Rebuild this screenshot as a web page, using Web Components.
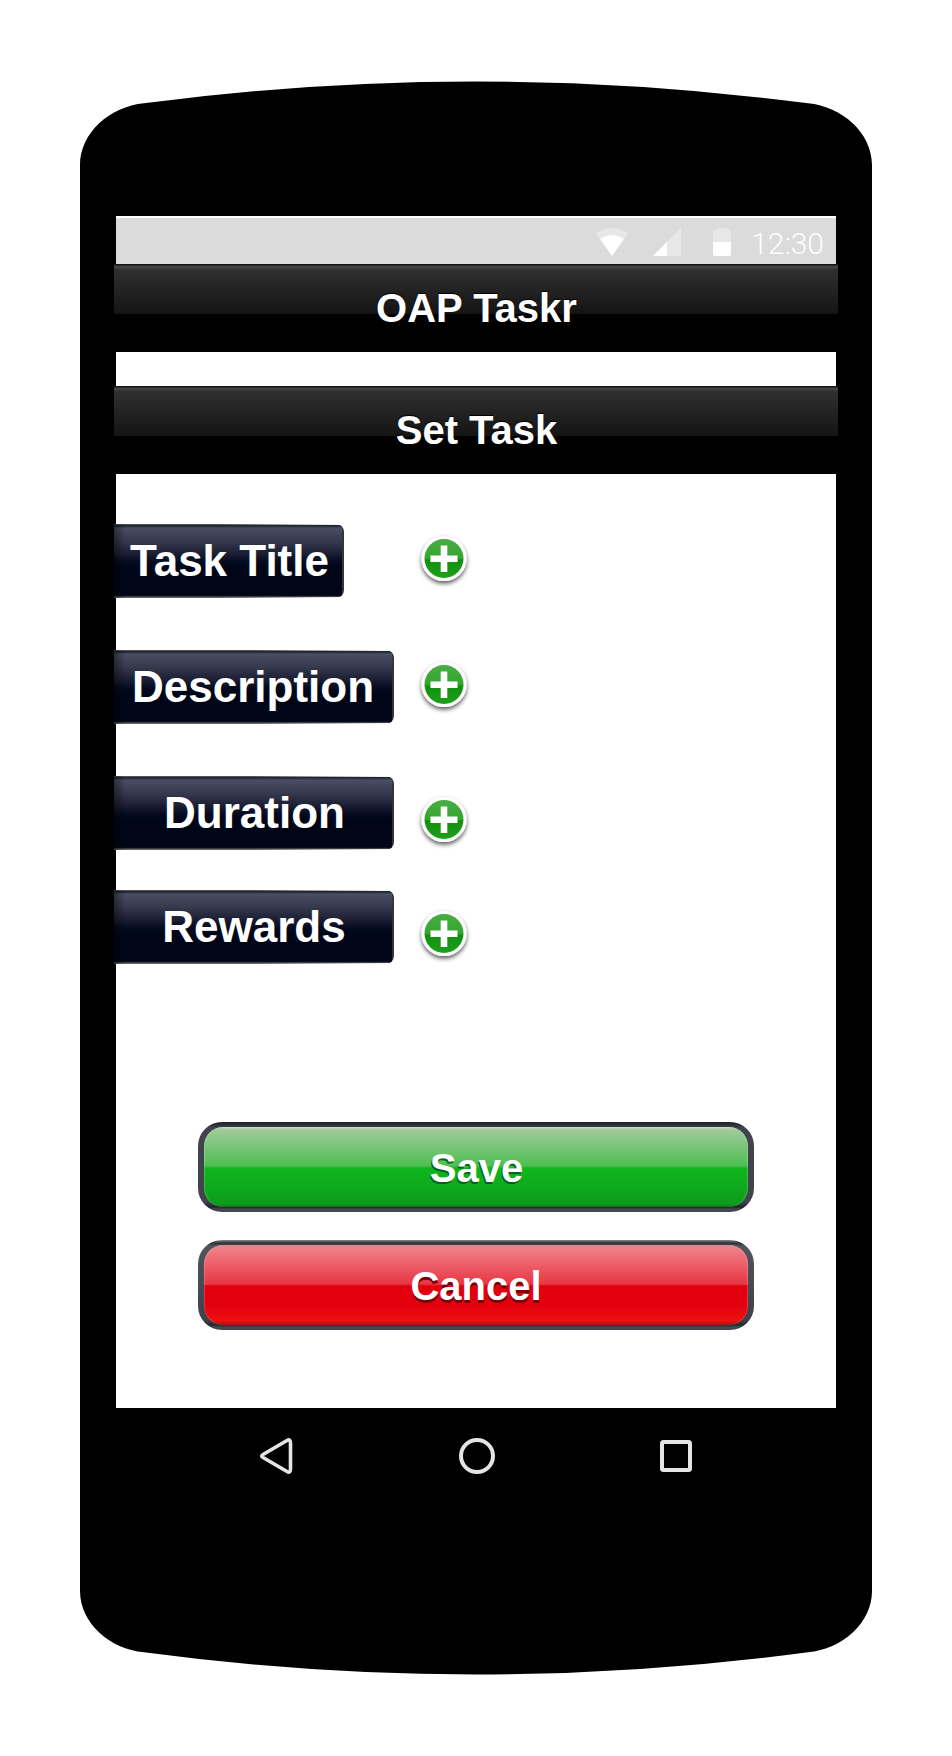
<!DOCTYPE html>
<html lang="en">
<head>
<meta charset="utf-8">
<title>OAP Taskr</title>
<style>
html,body{margin:0;background:#fff}
body{width:952px;height:1756px;overflow:hidden;font-family:"Liberation Sans",Arial,sans-serif}
</style>
</head>
<body>
<phone-frame>
  <status-bar slot="screen">12:30</status-bar>
  <title-bar slot="screen">OAP Taskr</title-bar>
  <title-bar slot="screen" style="margin-top:34px">Set Task</title-bar>
  <field-list slot="screen">
    <field-row style="--w:230px;--gap:76px;--indent:1px">Task Title</field-row>
    <field-row style="--w:280px;--indent:-2px">Description</field-row>
    <field-row style="--w:280px;--shift:9px;--indent:1px">Duration</field-row>
    <field-row style="--w:280px;--shift:9px;margin-top:-12px">Rewards</field-row>
  </field-list>
  <button-stack slot="screen">
    <glossy-button>Save</glossy-button>
    <glossy-button class="danger">Cancel</glossy-button>
  </button-stack>
  <nav-bar slot="nav"></nav-bar>
</phone-frame>
<script>
function define(name, html) {
  const t = document.createElement('template');
  t.innerHTML = html;
  customElements.define(name, class extends HTMLElement {
    constructor() {
      super();
      this.attachShadow({mode: 'open'}).appendChild(t.content.cloneNode(true));
    }
  });
}
define('phone-frame', `<style>
:host{display:grid;width:952px;height:1756px}
svg,.body{grid-area:1/1}
.body{padding:216px 116px 0;display:flex;flex-direction:column;min-width:0}
.screen{height:1192px;background:#fff;display:flex;flex-direction:column}
</style>
<svg width="952" height="1756" viewBox="0 0 952 1756"><path d="M80 165C80 133 110 106.500 144 103.300Q310 81.500 476 81.500T808 103.300C842 106.500 872 133 872 165V1591C872 1623 842 1649.500 808 1652.200Q642 1674.500 476 1674.500T144 1652.200C110 1649.500 80 1623 80 1591Z"/></svg>
<div class="body"><div class="screen"><slot name="screen"></slot></div><slot name="nav"></slot></div>`);
define('status-bar', `<style>
:host{display:flex;height:46px;border-top:2px solid #fff;background:#dbdbdb;color:#fdfdfd;font:300 30px/52px Roboto,sans-serif;justify-content:flex-end;padding-right:12px;box-sizing:content-box}
svg{margin-right:9px;flex:none}
</style>
<svg width="150" height="46" viewBox="0 0 150 46"><path fill="#e7e7e7" d="M4 15.500Q20 4.500 36 15.500L20 38Z"/><path fill="#fff" d="M8.200 21Q20 13 31.800 21L20 38Z"/><path fill="#e7e7e7" d="M61 38L89 10V38Z"/><path fill="#fff" d="M61 38L75 24V38Z"/><path fill="#e7e7e7" d="M121 24V14Q121 12 123 12H125V10H135V12H137Q139 12 139 14V24Z"/><path fill="#fff" d="M121 24H139V36Q139 38 137 38H123Q121 38 121 36Z"/></svg>
<span><slot></slot></span>`);
define('title-bar', `<style>
:host{display:block;flex:none;height:88px;margin:0 -2px;padding-left:1px;background:linear-gradient(#161616 0 1px,#2a2a2a 1px 2px,#424242 2px 4px,#393939 4px 5px,#303030 5px,#141414 50px,#000 50px);color:#fff;font-size:40px;font-weight:bold;line-height:88px;text-align:center;text-shadow:0 -1px 1px #000}
</style><slot></slot>`);
define('field-list', `<style>
:host{display:flex;flex-direction:column;gap:52px;margin:50px 0 0 -2px}
</style><slot></slot>`);
define('field-row', `<style>
:host{display:flex;height:74px;gap:var(--gap,26px);color:#fff;font-size:44px;font-weight:bold}
.label{box-sizing:border-box;width:var(--w);text-indent:var(--indent,0);line-height:74px;text-align:center;border-radius:0 8px 8px 0;
clip-path:polygon(0 0,45% 0,100% 1px,100% calc(100% - 1px),45% 100%,0 100%);
background:linear-gradient(90deg,transparent calc(100% - 2px),#33353a 0),linear-gradient(90deg,#0006 0,transparent 12px),linear-gradient(#555 0 1px,#222634 1px 2px,#4a4e64 4px,#35384c 18px,#1b1e33 30px,#050a1e 38px,#000618 44px,#000618 71px,#10131f 72px,#666 73px)}
.plus{margin-top:var(--shift,0);flex:none;overflow:visible}
</style>
<span class="label"><slot></slot></span>
<svg class="plus" width="48" height="74" viewBox="0 0 48 74"><defs><filter id="s" x="-30%" y="-30%" width="160%" height="170%"><feDropShadow dx="0" dy="2.500" stdDeviation="2.200" flood-opacity=".65"/></filter><linearGradient id="g" x2="0" y2="1"><stop stop-color="#47ae43"/><stop offset=".48" stop-color="#36a530"/><stop offset=".55" stop-color="#119010"/><stop offset="1" stop-color="#1ea01b"/></linearGradient></defs><circle cx="24" cy="34.500" r="22.600" fill="#fff" filter="url(#s)"/><circle cx="24" cy="34.500" r="19.500" fill="url(#g)"/><path d="M24 21.500V48M10.500 34.700H37.500" stroke="#fff" stroke-width="6.600"/></svg>`);
define('button-stack', `<style>
:host{display:flex;flex-direction:column;gap:28px;width:556px;margin:158px auto 0}
</style><slot></slot>`);
define('glossy-button', `<style>
:host{display:block;box-sizing:border-box;height:90px;padding:5px 6px;border-radius:24px;background:linear-gradient(#1d1e23,#41444c 6px,#41434c 80px,#202429 85px,#45474f 87px);color:#fff;font-size:40px;font-weight:bold}
:host(.danger){background:linear-gradient(#8a8b8d,#2c3035 3px,#50545b 6px,#3f424a 80px,#252930 85px,#45474f 87px);--face:linear-gradient(#d78790,#f08087 3px,#e73743 39px,#e2000f 41px,#e2000f 60px,#ee1111 76px,#9a1010);--shade:#7c0008}
div{box-sizing:border-box;height:80px;padding:1px 0 0 1px;border-radius:19px;line-height:80px;text-align:center;background:var(--face,linear-gradient(#c8dcc4,#9fca98 3px,#4dbf53 39px,#0eb61d 41px,#0eac1c 58px,#0e9a1d 78px,#0a6010));box-shadow:inset 1px 0 1px #fff3,inset -1px 0 1px #fff3;text-shadow:-1px 2px 0 var(--shade,#08631a)}
:host(.danger) div{padding-left:0;text-shadow:0 3px 0 var(--shade)}
</style><div><slot></slot></div>`);
define('nav-bar', `<style>
:host{display:flex;justify-content:space-between;padding:28px 142px 0 143px}
svg{fill:none;stroke:#e4e4e4;stroke-width:4;stroke-linejoin:round}
</style>
<svg width="36" height="40" viewBox="0 0 36 40"><path stroke-width="3.600" d="M4 18.500L28 4.500Q31.500 2.500 31.500 7V33Q31.500 37.500 28 35.500L4 21.500Q1.500 20 4 18.500Z"/></svg>
<svg width="40" height="40" viewBox="0 0 40 40"><circle cx="20" cy="20" r="16"/></svg>
<svg width="36" height="40" viewBox="0 0 36 40"><rect x="4" y="6" width="28" height="28" rx="1.500"/></svg>`);
</script>
</body>
</html>
